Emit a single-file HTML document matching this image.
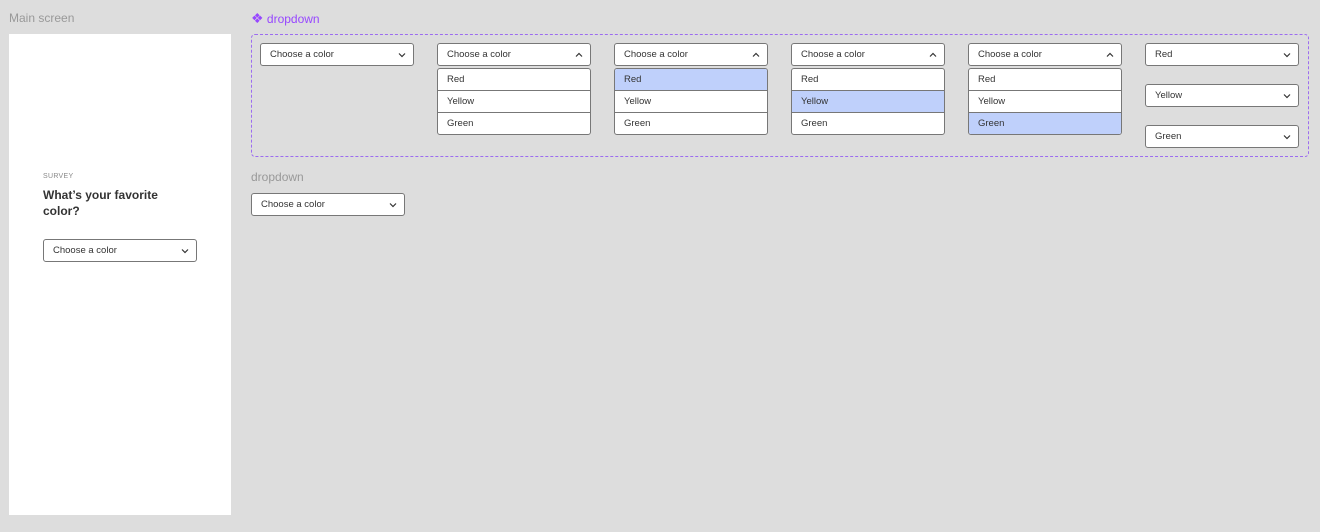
<!DOCTYPE html>
<html><head><style>
*{box-sizing:border-box;margin:0;padding:0}
body{width:1320px;height:532px;background:#dddddd;font-family:"Liberation Sans",sans-serif;position:relative;overflow:hidden;color:#333}
.a{position:absolute}
.dd{position:absolute;width:154px;height:23px;background:#fff;border:1px solid #777;border-radius:3px;font-size:9.5px;line-height:22px;padding-left:9px;color:#333}
.dd svg{position:absolute;right:7px;top:8px}
.list{position:absolute;width:154px;height:67px;background:#fff;border:1px solid #777;border-radius:3px;overflow:hidden;font-size:9.5px;color:#333}
.list div{height:22px;line-height:22px;padding-left:9px;border-bottom:1px solid #777}
.list div:last-child{border-bottom:none}
.sel{background:#bfd0fb}
</style></head><body>
<div class="a" style="left:9px;top:11px;font-size:12px;color:#999">Main screen</div>
<div class="a" style="left:9px;top:34px;width:222px;height:481px;background:#fff"></div>
<div class="a" style="left:43px;top:173px;font-size:7px;color:#888;letter-spacing:.3px">SURVEY</div>
<div class="a" style="left:43px;top:187px;font-size:12px;font-weight:bold;color:#333;line-height:16px;width:140px">What’s your favorite color?</div>
<div class="dd" style="left:43px;top:239px">Choose a color<svg width="8" height="6" viewBox="0 0 8 6"><path d="M1 1.5L4 4.5L7 1.5" fill="none" stroke="#333" stroke-width="1.2"/></svg></div>

<div class="a" style="left:251px;top:10px;font-size:12px;color:#9747ff"><span style="font-size:14px">❖</span> dropdown</div>
<div class="a" style="left:251px;top:34px;width:1058px;height:123px;border:1px dashed #9c6cf0;border-radius:4px"></div>

<div class="dd" style="left:260px;top:43px">Choose a color<svg width="8" height="6" viewBox="0 0 8 6"><path d="M1 1.5L4 4.5L7 1.5" fill="none" stroke="#333" stroke-width="1.2"/></svg></div>

<div class="dd" style="left:437px;top:43px">Choose a color<svg width="8" height="6" viewBox="0 0 8 6"><path d="M1 4.5L4 1.5L7 4.5" fill="none" stroke="#333" stroke-width="1.2"/></svg></div>
<div class="list" style="left:437px;top:68px"><div>Red</div><div>Yellow</div><div>Green</div></div>

<div class="dd" style="left:614px;top:43px">Choose a color<svg width="8" height="6" viewBox="0 0 8 6"><path d="M1 4.5L4 1.5L7 4.5" fill="none" stroke="#333" stroke-width="1.2"/></svg></div>
<div class="list" style="left:614px;top:68px"><div class="sel">Red</div><div>Yellow</div><div>Green</div></div>

<div class="dd" style="left:791px;top:43px">Choose a color<svg width="8" height="6" viewBox="0 0 8 6"><path d="M1 4.5L4 1.5L7 4.5" fill="none" stroke="#333" stroke-width="1.2"/></svg></div>
<div class="list" style="left:791px;top:68px"><div>Red</div><div class="sel">Yellow</div><div>Green</div></div>

<div class="dd" style="left:968px;top:43px">Choose a color<svg width="8" height="6" viewBox="0 0 8 6"><path d="M1 4.5L4 1.5L7 4.5" fill="none" stroke="#333" stroke-width="1.2"/></svg></div>
<div class="list" style="left:968px;top:68px"><div>Red</div><div>Yellow</div><div class="sel">Green</div></div>

<div class="dd" style="left:1145px;top:43px">Red<svg width="8" height="6" viewBox="0 0 8 6"><path d="M1 1.5L4 4.5L7 1.5" fill="none" stroke="#333" stroke-width="1.2"/></svg></div>
<div class="dd" style="left:1145px;top:84px">Yellow<svg width="8" height="6" viewBox="0 0 8 6"><path d="M1 1.5L4 4.5L7 1.5" fill="none" stroke="#333" stroke-width="1.2"/></svg></div>
<div class="dd" style="left:1145px;top:125px">Green<svg width="8" height="6" viewBox="0 0 8 6"><path d="M1 1.5L4 4.5L7 1.5" fill="none" stroke="#333" stroke-width="1.2"/></svg></div>

<div class="a" style="left:251px;top:170px;font-size:12px;color:#999">dropdown</div>
<div class="dd" style="left:251px;top:193px">Choose a color<svg width="8" height="6" viewBox="0 0 8 6"><path d="M1 1.5L4 4.5L7 1.5" fill="none" stroke="#333" stroke-width="1.2"/></svg></div>
</body></html>
